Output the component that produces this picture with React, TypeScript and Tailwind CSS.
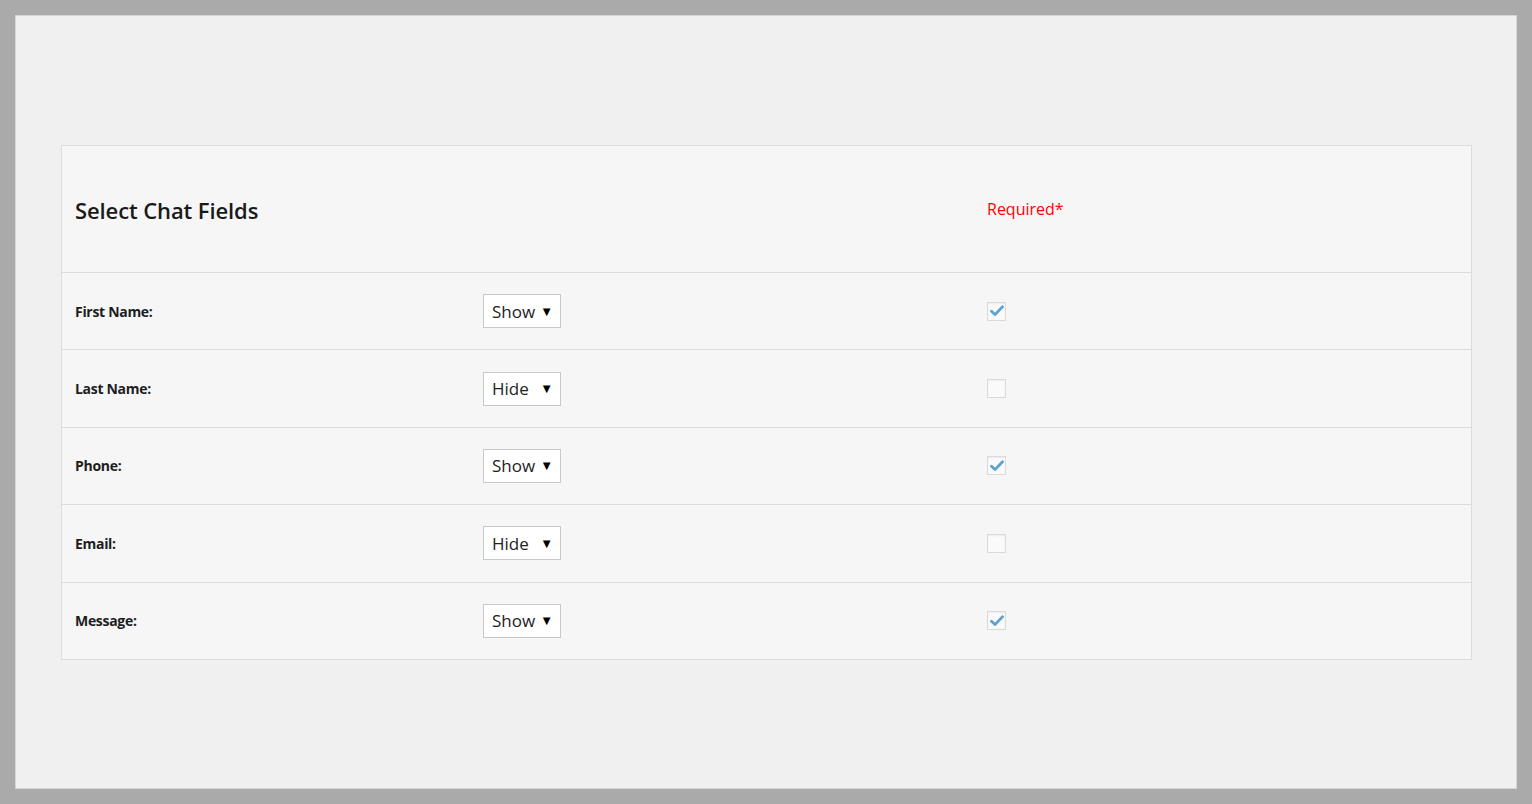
const FIELDS = [
  { label: "First Name:", value: "Show", required: true },
  { label: "Last Name:", value: "Hide", required: false },
  { label: "Phone:", value: "Show", required: true },
  { label: "Email:", value: "Hide", required: false },
  { label: "Message:", value: "Show", required: true },
];

function Checkbox({ checked }: { checked: boolean }) {
  return (
    <div className="flex h-[19px] w-[19px] items-center justify-center border border-[#dadada] bg-[#fafafa] shadow-[inset_0_1px_2px_rgba(0,0,0,0.06)]">
      {checked && (
        <svg width="14" height="12" viewBox="0 0 14 12" fill="none">
          <path d="M1.5 6.2 L5 9.6 L12.5 1.8" stroke="#5ba4d1" strokeWidth="2.8" strokeLinecap="round" strokeLinejoin="round" />
        </svg>
      )}
    </div>
  );
}

function FakeSelect({ value }: { value: string }) {
  return (
    <div className="flex h-[34px] w-[78px] items-center justify-between border border-[#c9c9c9] bg-white pl-[8px] pr-[7px] text-[17px] text-[#222]">
      <span className="leading-none">{value}</span>
      <span className="text-[13px] leading-none text-black">▼</span>
    </div>
  );
}

export default function App() {
  return (
    <div
      className="h-[804px] w-[1532px] bg-[#aaaaaa] p-[15px]"
      style={{ fontFamily: '"Open Sans", "Noto Sans", sans-serif' }}
    >
      <div className="h-full w-full border border-[#d6d6d6] bg-[#f0f0f0] pt-[129px] pl-[45px] pr-[44px]">
        <div className="border border-[#dcdcdc] bg-[#f6f6f6]">
          <div className="grid h-[126px] grid-cols-[408px_504px_1fr] items-center pl-[13px]">
            <h2 className="mt-[3px] text-[22px] font-semibold tracking-[-0.1px] text-[#1a1a1a]">Select Chat Fields</h2>
            <div />
            <span className="-mt-[1px] text-[16px] text-[#ff0000]">Required*</span>
          </div>
          {FIELDS.map((f) => (
            <div
              key={f.label}
              className="grid h-[77.4px] grid-cols-[408px_504px_1fr] items-center border-t border-[#dcdcdc] pl-[13px]"
            >
              <span className="text-[14px] font-bold tracking-[-0.3px] text-[#1d1d1d]">{f.label}</span>
              <FakeSelect value={f.value} />
              <Checkbox checked={f.required} />
            </div>
          ))}
        </div>
      </div>
    </div>
  );
}
